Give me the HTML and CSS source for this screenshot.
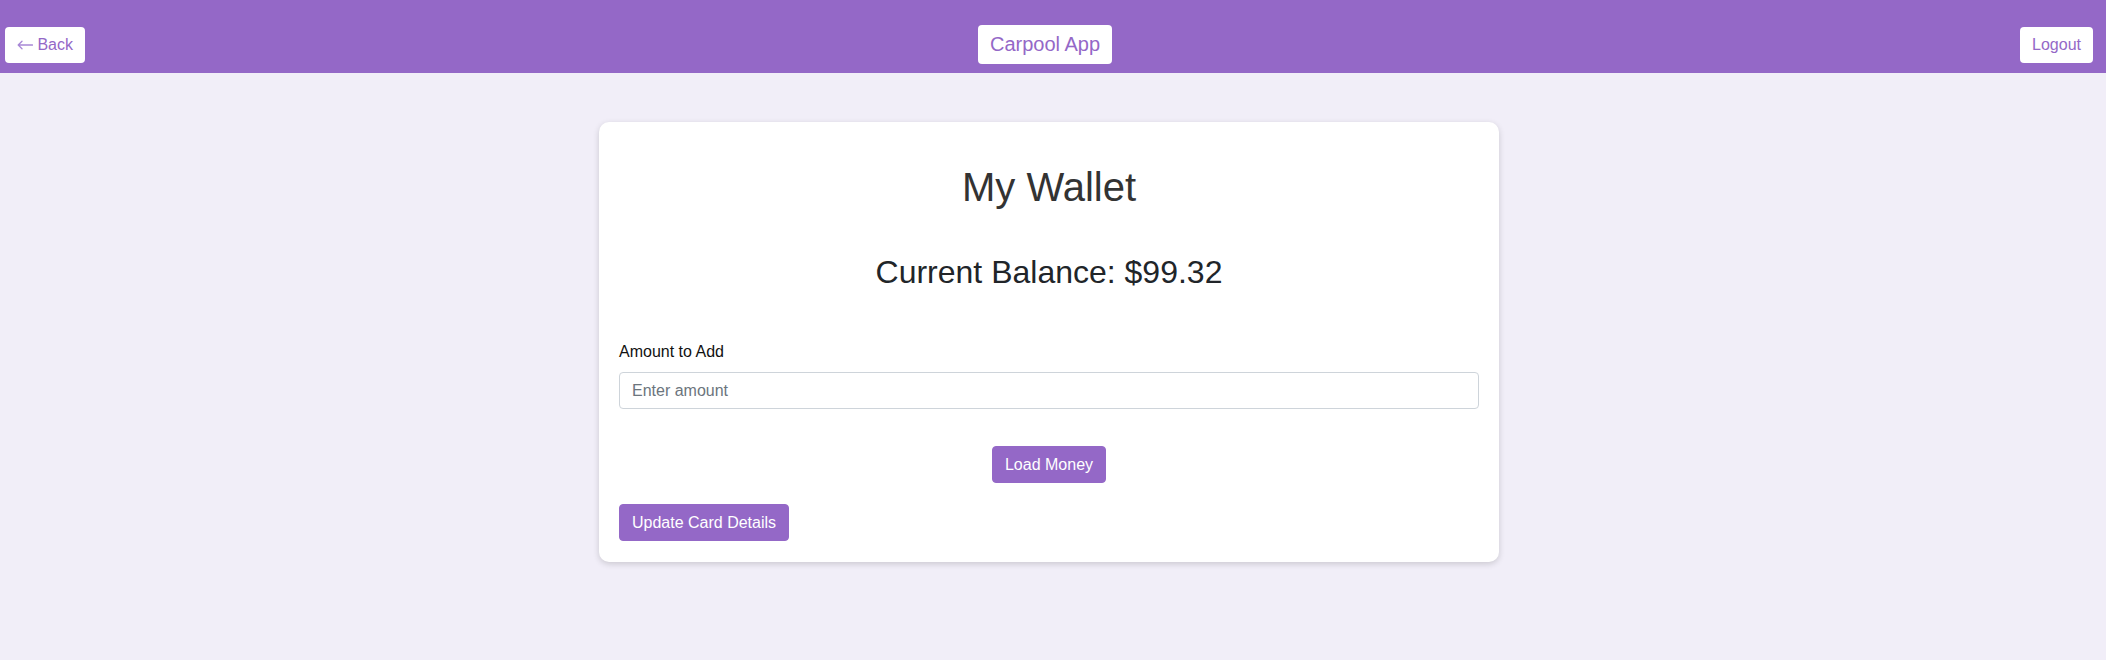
FILE: index.html
```html
<!DOCTYPE html>
<html lang="en">
<head>
<meta charset="utf-8">
<title>Carpool App - My Wallet</title>
<link rel="stylesheet" href="styles.css">
</head>
<body>
  <header class="topbar">
    <div class="topbar-left">
      <button class="nav-btn" type="button"><svg class="arrow" width="16" height="10" viewBox="0 0 16 10" aria-hidden="true"><path d="M15.5 5H1.2M5 1.2L1.2 5L5 8.8" fill="none" stroke="currentColor" stroke-width="1.3" stroke-linecap="round" stroke-linejoin="round"/></svg> Back</button>
    </div>
    <div class="brand">Carpool App</div>
    <div class="topbar-right">
      <button class="nav-btn" type="button">Logout</button>
    </div>
  </header>

  <main class="page">
    <section class="card">
      <h1 class="card-title">My Wallet</h1>
      <h2 class="balance">Current Balance: $99.32</h2>

      <div class="form-group">
        <label class="form-label" for="amount">Amount to Add</label>
        <input class="form-input" id="amount" type="text" placeholder="Enter amount">
      </div>

      <div class="actions-center">
        <button class="btn-primary" type="button">Load Money</button>
      </div>

      <div class="actions-left">
        <button class="btn-primary" type="button">Update Card Details</button>
      </div>
    </section>
  </main>
</body>
</html>
```

FILE: styles.css
```css
* {
  box-sizing: border-box;
}

html, body {
  margin: 0;
  padding: 0;
}

body {
  background: #f1eef8;
  font-family: "Liberation Sans", Arial, Helvetica, sans-serif;
  color: #212529;
  min-height: 660px;
}

.topbar {
  background: #9468c7;
  height: 73px;
  padding: 25px 21px 9px 5px;
  display: grid;
  grid-template-columns: 1fr auto 1fr;
  align-items: center;
}

.topbar-left {
  display: flex;
  justify-content: flex-start;
}

.topbar-right {
  display: flex;
  justify-content: flex-end;
  margin-right: -8px;
}

.nav-btn {
  background: #ffffff;
  color: #9468c7;
  border: none;
  border-radius: 4px;
  font-family: "Liberation Sans", Arial, sans-serif;
  font-size: 16px;
  line-height: 18px;
  padding: 9px 12px;
  cursor: pointer;
}

.arrow {
  color: #a888d6;
  vertical-align: 0;
}

.brand {
  background: #ffffff;
  color: #9468c7;
  border-radius: 4px;
  font-size: 20px;
  line-height: 23px;
  padding: 8px 12px;
}

.page {
  padding: 49px 8px 0 0;
}

.card {
  width: 900px;
  margin: 0 auto;
  background: #ffffff;
  border-radius: 10px;
  box-shadow: 0 2px 6px rgba(0, 0, 0, 0.16);
  padding: 20px 20px 21px;
}

.card-title {
  margin: 22px 0 0;
  font-size: 40px;
  line-height: 46px;
  font-weight: normal;
  text-align: center;
  color: #333333;
}

.balance {
  margin: 44px 0 0;
  font-size: 32px;
  line-height: 37px;
  font-weight: normal;
  text-align: center;
  color: #212529;
}

.form-group {
  margin-top: 49px;
}

.form-label {
  display: block;
  font-size: 16px;
  line-height: 24px;
  margin-bottom: 8px;
  color: #111111;
}

.form-input {
  display: block;
  width: 100%;
  height: 37px;
  padding: 8px 12px;
  border: 1px solid #ced4da;
  border-radius: 4px;
  font-family: "Liberation Sans", Arial, sans-serif;
  font-size: 16px;
  line-height: 19px;
  color: #212529;
  background: #ffffff;
}

.form-input::placeholder {
  color: #6c757d;
}

.actions-center {
  margin-top: 37px;
  display: flex;
  justify-content: center;
}

.actions-left {
  margin-top: 21px;
  display: flex;
  justify-content: flex-start;
}

.btn-primary {
  background: #9468c7;
  color: #ffffff;
  border: 1px solid #9468c7;
  border-radius: 4px;
  font-family: "Liberation Sans", Arial, sans-serif;
  font-size: 16px;
  line-height: 19px;
  padding: 8px 12px;
  cursor: pointer;
}
```
